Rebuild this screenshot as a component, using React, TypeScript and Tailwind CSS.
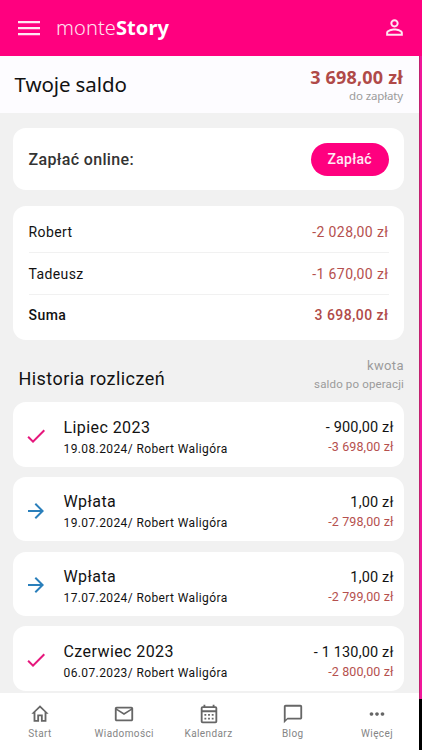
import type { ReactNode } from "react";

type Operation = {
  kind: "charge" | "payment";
  title: string;
  details: string;
  amount: string;
  balance: string;
};

const members = [
  { name: "Robert", amount: "-2 028,00 zł" },
  { name: "Tadeusz", amount: "-1 670,00 zł" },
];

const operations: Operation[] = [
  { kind: "charge", title: "Lipiec 2023", details: "19.08.2024/ Robert Waligóra", amount: "- 900,00 zł", balance: "-3 698,00 zł" },
  { kind: "payment", title: "Wpłata", details: "19.07.2024/ Robert Waligóra", amount: "1,00 zł", balance: "-2 798,00 zł" },
  { kind: "payment", title: "Wpłata", details: "17.07.2024/ Robert Waligóra", amount: "1,00 zł", balance: "-2 799,00 zł" },
  { kind: "charge", title: "Czerwiec 2023", details: "06.07.2023/ Robert Waligóra", amount: "- 1 130,00 zł", balance: "-2 800,00 zł" },
];

function CheckIcon() {
  return (
    <svg className="size-6 shrink-0" viewBox="0 0 24 24" fill="#e6177c">
      <path d="M9 16.17 4.83 12l-1.42 1.41L9 19 21 7l-1.41-1.41z" />
    </svg>
  );
}

function ArrowIcon() {
  return (
    <svg className="size-6 shrink-0" viewBox="0 0 24 24" fill="#2a7fbb">
      <path d="m12 4-1.41 1.41L16.17 11H4v2h12.17l-5.58 5.59L12 20l8-8z" />
    </svg>
  );
}

function OperationCard({ operation }: { operation: Operation }) {
  return (
    <article className="flex h-[64.6px] shrink-0 items-center rounded-[13px] bg-white pr-[10.5px] pl-[10.5px]">
      <div className="pt-[3px]">{operation.kind === "charge" ? <CheckIcon /> : <ArrowIcon />}</div>
      <div className="ml-4 flex-1 pt-[5.5px]">
        <p className="pt-px text-[16px] leading-[22px] tracking-[0.42px]">{operation.title}</p>
        <p className="text-[12px] leading-5 tracking-[0.39px]">{operation.details}</p>
      </div>
      <div className="pt-[5px] text-right">
        <p className="pt-px text-[14.5px] leading-[21px] tracking-[0.16px]">{operation.amount}</p>
        <p className="pb-px text-[12.5px] leading-[18px] tracking-[0.12px] text-[#b5504e]">{operation.balance}</p>
      </div>
    </article>
  );
}

function NavItem({ label, children }: { label: string; children: ReactNode }) {
  return (
    <div className="flex w-20 flex-col items-center pt-[10.5px]">
      <svg className="h-[22px] w-[22px]" viewBox="0 0 24 24" fill="#666">
        {children}
      </svg>
      <span className="mt-[1.5px] text-[10px] leading-[14px] tracking-[0.4px] text-[#858585]">{label}</span>
    </div>
  );
}

export default function App() {
  return (
    <div className="flex h-[750px] w-[422px] overflow-hidden bg-[#ff007f] font-['Roboto',sans-serif] text-[#121212]">
      <div className="flex w-[419px] shrink-0 flex-col bg-[#f1f1f1]">
        <header className="flex h-14 shrink-0 items-center bg-[#ff007f] pr-[12px] pl-[18px] font-['Noto_Sans',sans-serif]">
          <svg className="mb-px h-4 w-[22px]" viewBox="0 0 22 16" fill="#ffe6f2">
            <path d="M0 1h22v2.2H0zM0 7h22v2.2H0zM0 13h22v2.2H0z" />
          </svg>
          <h1 className="ml-4 flex-1 text-[20px] font-light tracking-[0.1px] text-[#ffe3f0]">
            monte<b className="font-bold text-white">Story</b>
          </h1>
          <svg className="mb-[2px] size-[25px]" viewBox="0 0 24 24" fill="#ffe6f2">
            <path d="M12 5.9a2.1 2.1 0 1 1 0 4.2 2.1 2.1 0 0 1 0-4.2m0 9c2.97 0 6.1 1.46 6.1 2.1v1.1H5.9V17c0-.64 3.13-2.1 6.1-2.1M12 4C9.79 4 8 5.79 8 8s1.79 4 4 4 4-1.79 4-4-1.79-4-4-4m0 9c-2.67 0-8 1.34-8 4v3h16v-3c0-2.66-5.33-4-8-4" />
          </svg>
        </header>

        <section className="flex h-[57px] shrink-0 items-center justify-between bg-[#fdfcff] pr-[16px] pl-[14.5px] font-['Noto_Sans',sans-serif]">
          <h2 className="pb-px text-[20.5px] tracking-[-0.1px]">Twoje saldo</h2>
          <div className="text-right">
            <p className="text-[18px] leading-[22px] font-bold tracking-[0.2px] text-[#b04a48]">3 698,00 zł</p>
            <p className="text-[11.5px] leading-4 tracking-[-0.15px] text-[#9b9b9b]">do zapłaty</p>
          </div>
        </section>

        <main className="flex min-h-0 flex-1 flex-col overflow-hidden pr-[15px] pl-[13px]">
          <section className="mt-[15.4px] flex h-[61.6px] shrink-0 items-center justify-between rounded-[13px] bg-white px-[15.5px]">
            <h3 className="pt-px text-[16px] font-medium tracking-[0.34px] text-[#333]">Zapłać online:</h3>
            <button className="h-[33px] w-[77.5px] rounded-full bg-[#ff007f] text-[14px] font-medium tracking-[0.25px] text-[#ffe9f4]">
              Zapłać
            </button>
          </section>

          <section className="mt-[15.6px] h-[134.7px] shrink-0 rounded-[13px] bg-white px-[15.5px] pt-[5px] text-[14px] tracking-[0.4px]">
            {members.map((member) => (
              <div key={member.name} className="flex h-[42px] items-center justify-between border-b-[1.5px] border-[#f1f1f1] pt-[2px]">
                <span>{member.name}</span>
                <span className="text-[#b5504e]">{member.amount}</span>
              </div>
            ))}
            <div className="flex h-[42px] items-center justify-between font-medium tracking-[0.45px]">
              <span>Suma</span>
              <span className="text-[#b04a48]">3 698,00 zł</span>
            </div>
          </section>

          <div className="flex h-[61.8px] shrink-0 items-center justify-between pl-[5.5px]">
            <h2 className="pt-[15px] text-[18px] tracking-[0.44px]">Historia rozliczeń</h2>
            <div className="pt-[8px] text-right text-[#9b9b9b]">
              <p className="text-[13px] leading-[18px] tracking-[0.4px]">kwota</p>
              <p className="text-[11.5px] leading-[18px] tracking-[0.15px]">saldo po operacji</p>
            </div>
          </div>

          <div className="flex flex-col gap-[10.2px]">
            {operations.map((operation) => (
              <OperationCard key={operation.details} operation={operation} />
            ))}
          </div>
        </main>

        <nav className="flex h-[57.5px] shrink-0 justify-between bg-white pr-[2px]">
          <NavItem label="Start">
            <path d="m12 5.1 5 4.7v8.7h-2v-6H9v6H7V9.8zM12 2.4 2.6 11.6H5v8.9h6v-6h2v6h6v-8.9h2.4z" />
          </NavItem>
          <NavItem label="Wiadomości">
            <path d="M20 4H4c-1.1 0-2 .9-2 2v12c0 1.1.9 2 2 2h16c1.1 0 2-.9 2-2V6c0-1.1-.9-2-2-2m0 14H4V8l8 5 8-5zm-8-7L4 6h16z" />
          </NavItem>
          <NavItem label="Kalendarz">
            <path d="M19 3.5h-1V1.8h-2v1.7H8V1.8H6v1.7H5a2 2 0 0 0-2 2v14.7a2 2 0 0 0 2 2h14a2 2 0 0 0 2-2V5.5a2 2 0 0 0-2-2m0 16.7H5V10h14zM19 8H5V5.5h14zM7 12h2v2H7zm4 0h2v2h-2zm4 0h2v2h-2zm-8 4h2v2H7zm4 0h2v2h-2zm4 0h2v2h-2z" />
          </NavItem>
          <NavItem label="Blog">
            <path d="M20 2H4c-1.1 0-2 .9-2 2v18l4-4h14c1.1 0 2-.9 2-2V4c0-1.1-.9-2-2-2m0 14H6l-2 2V4h16z" />
          </NavItem>
          <NavItem label="Więcej">
            <path d="M6 10c-1.1 0-2 .9-2 2s.9 2 2 2 2-.9 2-2-.9-2-2-2m12 0c-1.1 0-2 .9-2 2s.9 2 2 2 2-.9 2-2-.9-2-2-2m-6 0c-1.1 0-2 .9-2 2s.9 2 2 2 2-.9 2-2-.9-2-2-2" />
          </NavItem>
        </nav>
      </div>

      <div className="flex flex-1 flex-col">
        <div className="h-14 bg-[#ff007f]" />
        <div className="h-[643px] border-l border-[#c0226f] bg-[#f0179a]" />
        <div className="flex-1 bg-black" />
      </div>
    </div>
  );
}
